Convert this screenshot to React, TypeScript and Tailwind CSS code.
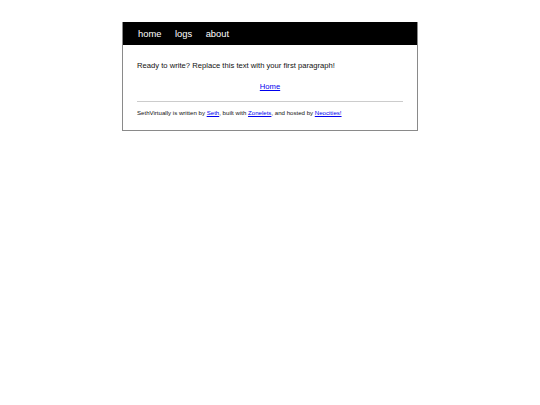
export default function App() {
  return (
    <div className="min-h-screen bg-white pt-[22px] font-['Liberation_Sans',Arial,sans-serif] text-black">
      <div className="mx-auto w-[296px] border border-[#8a8a8a] border-t-0">
        <nav className="flex h-[23px] items-center gap-[13.5px] bg-black pl-[15px] text-[9.4px] leading-[23px] text-white">
          <a href="#">home</a>
          <a href="#">logs</a>
          <a href="#">about</a>
        </nav>
        <main className="px-[14px] pb-[14px] pt-[16px]">
          <p className="text-[7.65px] leading-[9px] text-[#111]">
            Ready to write? Replace this text with your first paragraph!
          </p>
          <p className="mt-[12px] text-center text-[7.65px] leading-[9px]">
            <a href="#" className="text-[#0000ee] underline">
              Home
            </a>
          </p>
          <hr className="mt-[9.5px] border-t border-[#cccccc]" />
          <footer className="mt-[7.5px] text-[6.1px] leading-[7px] text-[#111]">
            SethVirtually is written by{" "}
            <a href="#" className="text-[#0000ee] underline">
              Seth
            </a>
            , built with{" "}
            <a href="#" className="text-[#0000ee] underline">
              Zonelets
            </a>
            , and hosted by{" "}
            <a href="#" className="text-[#0000ee] underline">
              Neocities!
            </a>
          </footer>
        </main>
      </div>
    </div>
  );
}
